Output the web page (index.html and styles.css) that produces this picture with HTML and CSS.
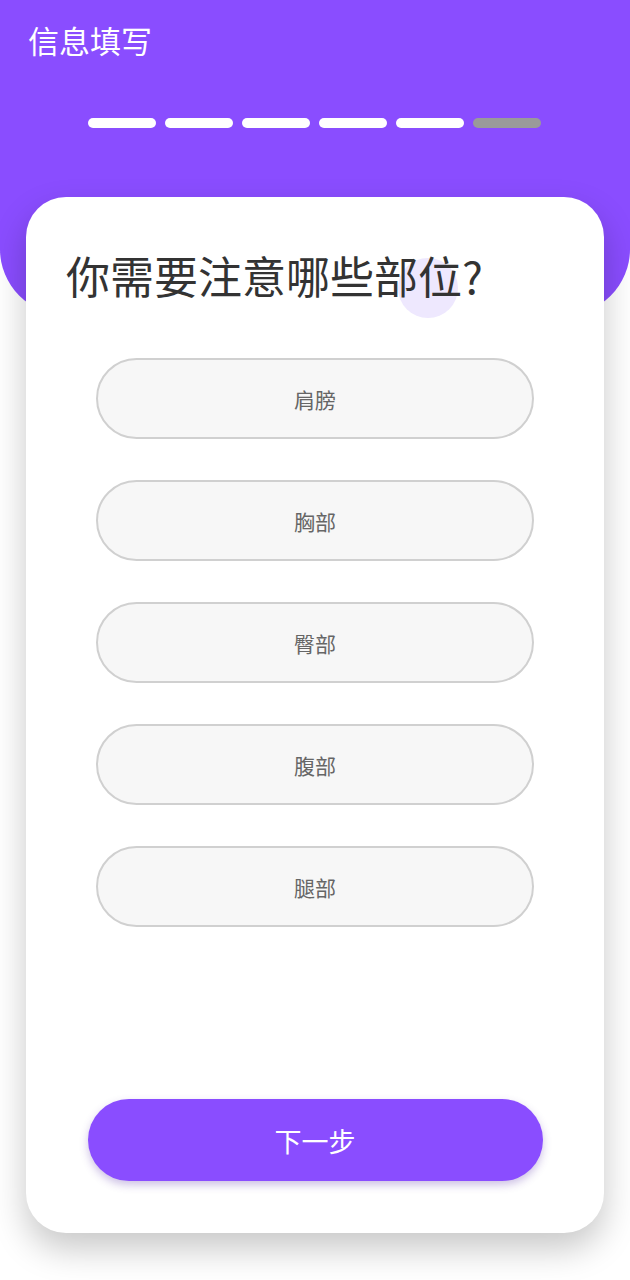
FILE: index.html
```html
<!DOCTYPE html>
<html lang="zh">
<head>
<meta charset="utf-8">
<title>信息填写</title>
<link rel="stylesheet" href="styles.css">
</head>
<body>
<div class="page">
  <header class="header">
    <h1 class="title">信息填写</h1>
    <div class="steps">
      <span class="step done"></span>
      <span class="step done"></span>
      <span class="step done"></span>
      <span class="step done"></span>
      <span class="step done"></span>
      <span class="step todo"></span>
    </div>
  </header>
  <main class="card">
    <span class="ripple"></span>
    <h2 class="question">你需要注意哪些部位?</h2>
    <div class="options">
      <div class="option">肩膀</div>
      <div class="option">胸部</div>
      <div class="option">臀部</div>
      <div class="option">腹部</div>
      <div class="option">腿部</div>
    </div>
    <div class="spacer"></div>
    <button class="next">下一步</button>
  </main>
</div>
</body>
</html>
```
FILE: styles.css
```css
* { box-sizing: border-box; }
html, body {
  margin: 0;
  padding: 0;
  background: #ffffff;
}
body {
  font-family: "Noto Sans CJK SC", "Noto Sans", sans-serif;
  width: 630px;
  height: 1280px;
  overflow: hidden;
}
.page {
  display: flex;
  flex-direction: column;
}
.header {
  height: 315px;
  background: #8a4dff;
  border-radius: 0 0 66px 66px;
  padding: 20px 0 0 28px;
  display: flex;
  flex-direction: column;
}
.title {
  margin: 0;
  font-size: 31px;
  line-height: 40px;
  font-weight: 400;
  color: #ffffff;
}
.steps {
  margin-top: 58px;
  margin-left: 60px;
  display: flex;
  gap: 9px;
}
.step {
  width: 68px;
  height: 10px;
  border-radius: 5px;
}
.step.done { background: #ffffff; }
.step.todo { background: #9a9a9a; }

.card {
  position: relative;
  margin: -118px 0 0 26px;
  width: 578px;
  height: 1036px;
  background: #ffffff;
  border-radius: 40px;
  box-shadow: 0 16px 34px rgba(0, 0, 0, 0.22);
  padding: 52px 0 52px 0;
  display: flex;
  flex-direction: column;
  align-items: center;
}
.ripple {
  position: absolute;
  left: 372px;
  top: 61px;
  width: 60px;
  height: 60px;
  border-radius: 50%;
  background: #eee8fe;
}
.question {
  position: relative;
  align-self: flex-start;
  margin: 0 0 0 40px;
  font-size: 44px;
  line-height: 52px;
  font-weight: 400;
  color: #333333;
}
.options {
  margin-top: 57px;
  display: flex;
  flex-direction: column;
  gap: 41px;
}
.option {
  width: 438px;
  height: 81px;
  border: 2px solid #d0d0d0;
  border-radius: 41px;
  background: #f7f7f7;
  display: flex;
  align-items: center;
  justify-content: center;
  font-size: 21px;
  color: #666666;
}
.spacer { flex: 1; }
.next {
  width: 455px;
  height: 82px;
  border: none;
  border-radius: 41px;
  background: #8a4dff;
  color: #ffffff;
  font-family: "Noto Sans CJK SC", "Noto Sans", sans-serif;
  font-size: 27px;
  box-shadow: 0 4px 8px rgba(90, 50, 170, 0.3);
}
```
